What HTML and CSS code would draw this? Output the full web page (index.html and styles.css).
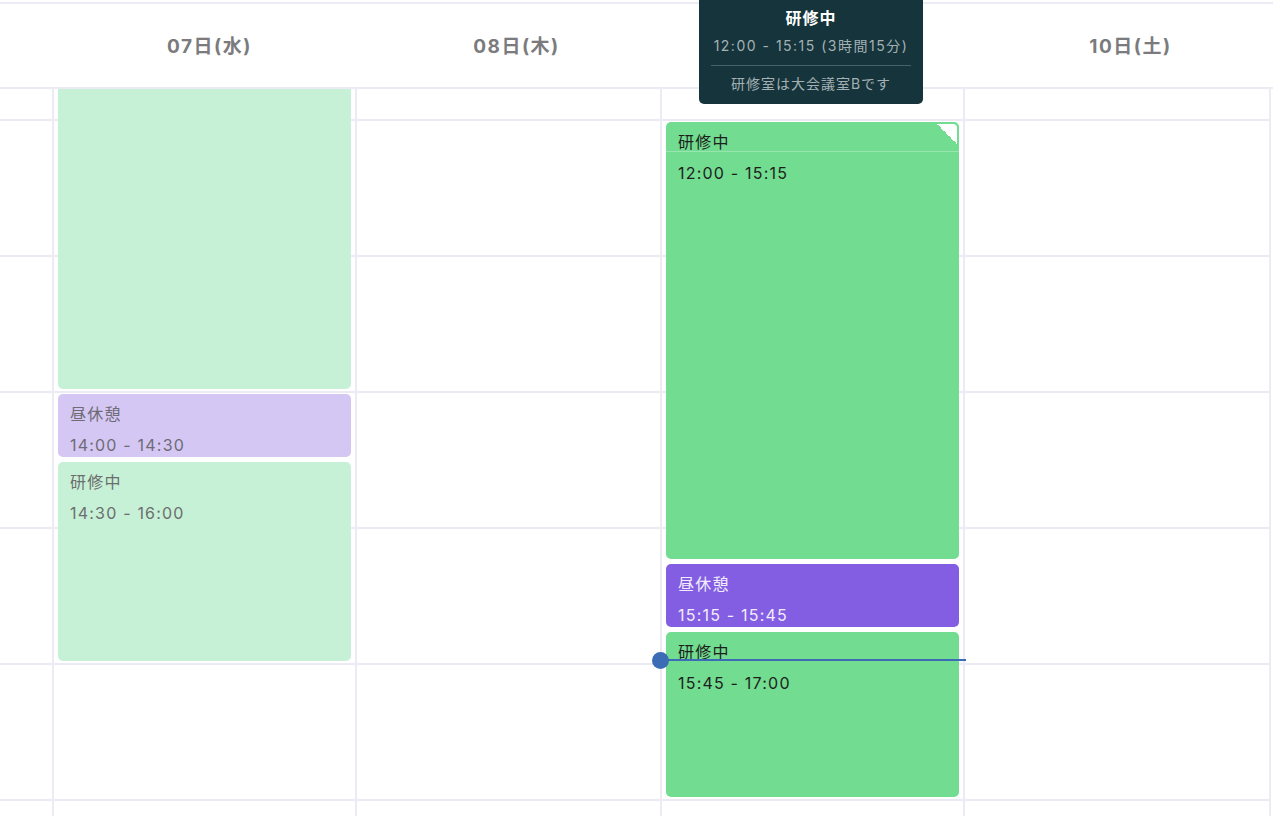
FILE: index.html
```html
<!DOCTYPE html>
<html lang="ja">
<head>
  <meta charset="UTF-8">
  <meta name="viewport" content="width=device-width, initial-scale=1.0">
  <title>週間スケジュール</title>
  <link rel="stylesheet" href="styles.css">
</head>
<body>

  <div class="calendar">
    <div class="head">
      <div class="gutter"></div>
      <div class="day-label">07日(水)</div>
      <div class="day-label">08日(木)</div>
      <div class="day-label">09日(金)</div>
      <div class="day-label">10日(土)</div>
    </div>

    <div class="grid">
      <div class="gutter"></div>

      <div class="day">
        <!-- starts above the visible hours -->
        <div class="event green past" style="top: -103px; height: 403px;"></div>
        <div class="event purple past" style="top: 305px; height: 63px;">
          <div class="title">昼休憩</div>
          <div class="time">14:00 - 14:30</div>
        </div>
        <div class="event green past" style="top: 373px; height: 199px;">
          <div class="title">研修中</div>
          <div class="time">14:30 - 16:00</div>
        </div>
      </div>

      <div class="day"></div>

      <div class="day">
        <div class="event green active" style="top: 33px; height: 437px;">
          <div class="title">研修中</div>
          <div class="time">12:00 - 15:15</div>
          <span class="fold"></span>
        </div>
        <div class="event purple" style="top: 475px; height: 63px;">
          <div class="title">昼休憩</div>
          <div class="time">15:15 - 15:45</div>
        </div>
        <div class="event green" style="top: 543px; height: 165px;">
          <div class="title">研修中</div>
          <div class="time">15:45 - 17:00</div>
        </div>
        <div class="now-line" style="top: 570px;"></div>
      </div>

      <div class="day last"></div>
    </div>

    <div class="tooltip">
      <div class="tip-title">研修中</div>
      <div class="tip-time">12:00 - 15:15 (3時間15分)</div>
      <div class="tip-note">研修室は大会議室Bです</div>
    </div>
  </div>

</body>
</html>
```

FILE: styles.css
```css
body {
  margin: 0;
  background-color: #fff;
  font-family: Inter, "Noto Sans CJK JP", sans-serif;
  overflow: hidden;
}

.calendar {
  position: relative;
  width: 1273px;
  margin-top: 2px;
  border-top: 2px solid #ecebf3;
}

.head {
  display: grid;
  grid-template-columns: 56px repeat(4, 307px);
  align-items: center;
  height: 80px;
  padding-bottom: 3px;
  border-bottom: 2px solid #ecebf3;
  overflow: hidden;
}

.day-label {
  text-align: center;
  font-size: 19px;
  font-weight: 700;
  color: #7b7b7e;
  letter-spacing: 1.5px;
}

.grid {
  display: grid;
  grid-template-columns: 52px 303px 305px 303px 308px;
  width: 1271px;
  height: 730px;
  overflow: hidden;
  background-image: repeating-linear-gradient(
    to bottom,
    transparent 0 30px,
    #ecebf3 30px 32px,
    transparent 32px 136px
  );
}

.day {
  position: relative;
  border-left: 2px solid #ecebf3;
}

.day.last {
  border-right: 2px solid #ecebf3;
}

.event {
  position: absolute;
  left: 4px;
  right: 4px;
  box-sizing: border-box;
  padding: 11px 12px 0;
  border-radius: 5px;
  font-size: 16px;
  letter-spacing: 1.2px;
  overflow: hidden;
}

.event .title {
  line-height: 18px;
  padding-bottom: 1px;
}

.event .time {
  line-height: 18px;
  margin-top: 12px;
}

.event.green {
  background-color: #72dc90;
  color: #1d1f1d;
}

.event.purple {
  background-color: #835ee3;
  color: #f1edfc;
}

.event.green.past {
  background-color: #c7f1d7;
  color: #6c6e6d;
}

.event.purple.past {
  background-color: #d4c7f4;
  color: #6e6b75;
}

.event.active .title {
  border-bottom: 1px solid rgba(255, 255, 255, 0.28);
  margin: 0 -12px;
  padding: 0 12px 0;
}

.fold {
  position: absolute;
  top: 2px;
  right: 2px;
  width: 20px;
  height: 20px;
  border-top-right-radius: 4px;
  background: linear-gradient(to bottom left, #fff 50%, transparent 50%);
}

.now-line {
  position: absolute;
  left: -2px;
  right: -3px;
  height: 2px;
  background-color: #3b6cb5;
  z-index: 2;
}

.now-line::before {
  content: "";
  position: absolute;
  left: -8px;
  top: -7px;
  width: 17px;
  height: 17px;
  border-radius: 50%;
  background-color: #3b6cb5;
}

.tooltip {
  position: absolute;
  top: -4px;
  left: 699px;
  width: 224px;
  box-sizing: border-box;
  padding: 8px 12px 10px;
  background-color: #16343b;
  border-radius: 0 0 5px 5px;
  text-align: center;
  z-index: 5;
}

.tip-title {
  line-height: 20px;
  font-size: 16px;
  font-weight: 700;
  color: #fff;
  letter-spacing: 1px;
}

.tip-time {
  line-height: 20px;
  margin-top: 8px;
  padding-bottom: 9px;
  border-bottom: 1px solid #46616a;
  font-size: 14px;
  color: #a4b1b4;
  letter-spacing: 1.5px;
  white-space: nowrap;
}

.tip-note {
  line-height: 20px;
  margin-top: 8px;
  font-size: 14px;
  color: #a4b1b4;
  letter-spacing: 1px;
}
```
